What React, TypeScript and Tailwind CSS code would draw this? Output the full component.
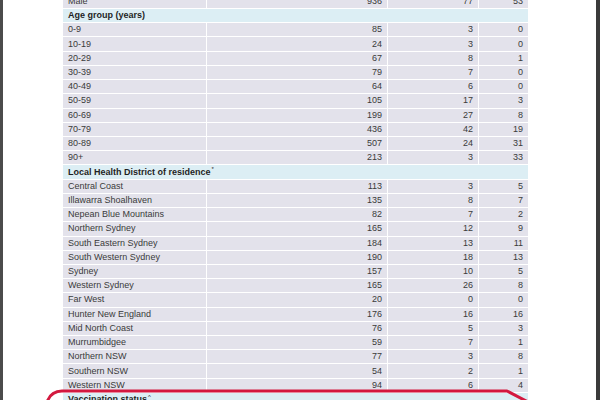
import React from 'react';

type Row = { label: string; values: [number, number, number] };

const ageRows: Row[] = [
  { label: '0-9', values: [85, 3, 0] },
  { label: '10-19', values: [24, 3, 0] },
  { label: '20-29', values: [67, 8, 1] },
  { label: '30-39', values: [79, 7, 0] },
  { label: '40-49', values: [64, 6, 0] },
  { label: '50-59', values: [105, 17, 3] },
  { label: '60-69', values: [199, 27, 8] },
  { label: '70-79', values: [436, 42, 19] },
  { label: '80-89', values: [507, 24, 31] },
  { label: '90+', values: [213, 3, 33] },
];

const districtRows: Row[] = [
  { label: 'Central Coast', values: [113, 3, 5] },
  { label: 'Illawarra Shoalhaven', values: [135, 8, 7] },
  { label: 'Nepean Blue Mountains', values: [82, 7, 2] },
  { label: 'Northern Sydney', values: [165, 12, 9] },
  { label: 'South Eastern Sydney', values: [184, 13, 11] },
  { label: 'South Western Sydney', values: [190, 18, 13] },
  { label: 'Sydney', values: [157, 10, 5] },
  { label: 'Western Sydney', values: [165, 26, 8] },
  { label: 'Far West', values: [20, 0, 0] },
  { label: 'Hunter New England', values: [176, 16, 16] },
  { label: 'Mid North Coast', values: [76, 5, 3] },
  { label: 'Murrumbidgee', values: [59, 7, 1] },
  { label: 'Northern NSW', values: [77, 3, 8] },
  { label: 'Southern NSW', values: [54, 2, 1] },
  { label: 'Western NSW', values: [94, 6, 4] },
];

function DataRow({ row }: { row: Row }) {
  return (
    <div className="grid grid-cols-[143px_180px_90px_49px] gap-px h-[13.22px]">
      <div className="bg-[#e3e2eb] flex items-center pl-[5px]">{row.label}</div>
      {row.values.map((v, i) => (
        <div key={i} className="bg-[#e3e2eb] flex items-center justify-end pr-[5px]">
          {v}
        </div>
      ))}
    </div>
  );
}

function SectionHeader({ title, mark }: { title: string; mark?: string }) {
  return (
    <div className="h-[13.22px] bg-[#dceef4] flex items-center pl-[5px] font-bold text-[#1f1f1f]">
      {title}
      {mark && <sup className="text-[6px] font-normal ml-[1px] -top-[3px]">{mark}</sup>}
    </div>
  );
}

export default function App() {
  return (
    <div className="relative w-[600px] h-[400px] overflow-hidden bg-white flex">
      <div className="w-[3px] bg-[#4b4b4b]" />

      <div className="flex-1 overflow-hidden">
        {/* Table */}
        <div
          className="ml-[60px] -mt-[5.22px] w-[465px] flex flex-col gap-px text-[9px] leading-none text-[#3a3a3a]"
          style={{ fontFamily: '"Liberation Sans", Arial, sans-serif' }}
        >
          <DataRow row={{ label: 'Male', values: [936, 77, 53] }} />
          <SectionHeader title="Age group (years)" />
          {ageRows.map((r) => (
            <DataRow key={r.label} row={r} />
          ))}
          <SectionHeader title="Local Health District of residence" mark="*" />
          {districtRows.map((r) => (
            <DataRow key={r.label} row={r} />
          ))}
          <SectionHeader title="Vaccination status" mark="^" />
          <DataRow row={{ label: 'Unvaccinated', values: [0, 0, 0] }} />
        </div>
      </div>

      <div className="w-[4px] bg-[#3a3a3a]" />

      {/* Red highlight annotation */}
      <svg className="absolute inset-0 pointer-events-none" width="600" height="400">
        <path
          d="M46 406 Q49 391 62 391 L507 391 L530 403"
          fill="none"
          stroke="#d3193f"
          strokeWidth="3"
          strokeLinejoin="round"
        />
      </svg>
    </div>
  );
}
